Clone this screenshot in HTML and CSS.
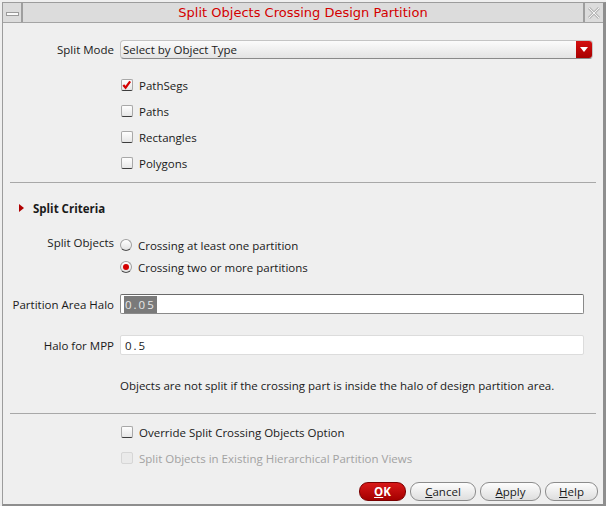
FILE: index.html
```html
<!DOCTYPE html>
<html>
<head>
<meta charset="utf-8">
<link rel="stylesheet" href="styles.css">
</head>
<body>
<div class="window">
  <div class="titlebar">
    <div class="tb-btn tb-min"><span class="min-bar"></span></div>
    <div class="tb-title">Split Objects Crossing Design Partition</div>
    <div class="tb-btn tb-close">
      <svg width="16" height="16" viewBox="0 0 16 16"><path d="M3 3 L13 13 M13 3 L3 13" stroke="#b8b8b8" stroke-width="3" fill="none"/><path d="M3 3 L13 13 M13 3 L3 13" stroke="#f4f4f4" stroke-width="1" fill="none"/></svg>
    </div>
  </div>
  <div class="content">
    <div class="row row-combo">
      <div class="label">Split Mode</div>
      <div class="combo"><span class="combo-text">Select by Object Type</span><span class="combo-btn"><svg width="8" height="5" viewBox="0 0 8 5"><path d="M0 0 H8 L4 5 Z" fill="#fff"/></svg></span></div>
    </div>
    <div class="checks first-checks">
      <div class="check-row"><span class="cb checked"><svg width="12" height="12" viewBox="0 0 12 12"><path d="M2.5 6 L5 9 L10 2" stroke="#d40000" stroke-width="2.4" fill="none"/></svg></span><span>PathSegs</span></div>
      <div class="check-row"><span class="cb"></span><span>Paths</span></div>
      <div class="check-row"><span class="cb"></span><span>Rectangles</span></div>
      <div class="check-row"><span class="cb"></span><span>Polygons</span></div>
    </div>
    <div class="sep sep1"></div>
    <div class="section"><svg class="tri" width="5" height="8" viewBox="0 0 5 8"><path d="M0 0 L5 4 L0 8 Z" fill="#b00000"/></svg><span class="section-title">Split Criteria</span></div>
    <div class="row row-radios">
      <div class="label label-top">Split Objects</div>
      <div class="radios">
        <div class="check-row radio-row"><span class="radio"></span><span>Crossing at least one partition</span></div>
        <div class="check-row radio-row"><span class="radio on"><span class="dot"></span></span><span>Crossing two or more partitions</span></div>
      </div>
    </div>
    <div class="row row-input1">
      <div class="label">Partition Area Halo</div>
      <div class="input input-focus"><span class="sel">0.05</span></div>
    </div>
    <div class="row row-input2">
      <div class="label">Halo for MPP</div>
      <div class="input"><span class="val">0.5</span></div>
    </div>
    <div class="info">Objects are not split if the crossing part is inside the halo of design partition area.</div>
    <div class="sep sep2"></div>
    <div class="checks last-checks">
      <div class="check-row"><span class="cb"></span><span>Override Split Crossing Objects Option</span></div>
      <div class="check-row disabled"><span class="cb cb-dis"></span><span>Split Objects in Existing Hierarchical Partition Views</span></div>
    </div>
    <div class="buttons">
      <div class="btn btn-ok"><u>O</u>K</div>
      <div class="btn btn-cancel"><u>C</u>ancel</div>
      <div class="btn btn-apply"><u>A</u>pply</div>
      <div class="btn btn-help"><u>H</u>elp</div>
    </div>
  </div>
</div>
</body>
</html>
```

FILE: styles.css
```css
html, body {
  margin: 0;
  padding: 0;
  background: #efefef;
}
body {
  font-family: "Open Sans", "DejaVu Sans", sans-serif;
  font-size: 11.5px;
  color: #1a1a1a;
}
.window {
  margin: 2px 0 0 2px;
  width: 604px;
  height: 504px;
  box-sizing: border-box;
  border-left: 1px solid #9c9c9c;
  border-top: 1px solid #9c9c9c;
  border-right: 3px solid #8e8e8e;
  border-bottom: 2px solid #8e8e8e;
  background: #efefef;
  display: flex;
  flex-direction: column;
}
.titlebar {
  height: 19px;
  display: flex;
  background: #dcdcdc;
  border-bottom: 1px solid #a4a4a4;
}
.tb-btn {
  width: 18px;
  display: flex;
  align-items: center;
  justify-content: center;
  background: #dcdcdc;
}
.tb-min {
  border-right: 2px solid #9e9e9e;
}
.min-bar {
  width: 11px;
  height: 2px;
  border: 1px solid #9a9a9a;
  background: #fafafa;
  margin-top: 2px;
}
.tb-close {
  border-left: 2px solid #9e9e9e;
  width: 18px;
}
.tb-title {
  flex: 1;
  text-align: center;
  color: #d40000;
  font-size: 13px;
  line-height: 19px;
  font-family: "DejaVu Sans", sans-serif;
}
.content {
  flex: 1;
  padding-top: 17px;
  display: flex;
  flex-direction: column;
}
.row {
  display: grid;
  grid-template-columns: 111px 1fr;
  column-gap: 6px;
  align-items: center;
}
.label {
  text-align: right;
}
.label-top {
  align-self: start;
  margin-top: 1px;
}
.combo {
  height: 19px;
  margin-right: 10px;
  box-sizing: border-box;
  border: 1px solid #c4c4c4;
  border-bottom-color: #8a8a8a;
  border-radius: 4px;
  background: linear-gradient(#fbfbfb, #e4e4e4);
  display: flex;
  align-items: center;
  overflow: hidden;
}
.combo-text {
  flex: 1;
  padding-left: 2px;
}
.combo-btn {
  width: 16px;
  height: 100%;
  background: linear-gradient(#d41010, #a80000);
  display: flex;
  align-items: center;
  justify-content: center;
}
.checks {
  margin-left: 118px;
  display: flex;
  flex-direction: column;
}
.first-checks {
  margin-top: 13px;
}
.check-row {
  height: 26px;
  display: flex;
  align-items: center;
  gap: 6px;
}
.cb {
  width: 12px;
  height: 12px;
  box-sizing: border-box;
  border: 1px solid #a8a8a8;
  border-bottom: 1px solid #3c3c3c;
  border-radius: 2px;
  background: linear-gradient(#fefefe, #e6e6e6);
  display: flex;
}
.cb svg {
  margin: -1px 0 0 -1px;
}
.cb-dis {
  border-color: #d6d6d6;
  background: #eaeaea;
}
.disabled {
  color: #a2a2a2;
}
.sep {
  height: 1px;
  background: #a8a8a8;
  margin-left: 7px;
  margin-right: 7px;
}
.sep1 {
  margin-top: 6px;
}
.section {
  margin-top: 15px;
  height: 20px;
  display: flex;
  align-items: center;
  padding-left: 16px;
}
.tri {
  margin-right: 9px;
}
.section-title {
  font-weight: bold;
}
.row-radios {
  margin-top: 16px;
}
.radios {
  display: flex;
  flex-direction: column;
}
.radio-row {
  height: 22px;
}
.radio {
  width: 12px;
  height: 12px;
  box-sizing: border-box;
  border-radius: 50%;
  border: 1px solid #a0a0a0;
  border-bottom-color: #505050;
  background: linear-gradient(#ffffff, #e2e2e2);
  display: flex;
  align-items: center;
  justify-content: center;
}
.dot {
  width: 6px;
  height: 6px;
  border-radius: 50%;
  background: #d40000;
}
.row-input1 {
  margin-top: 16px;
}
.row-input2 {
  margin-top: 21px;
}
.input {
  height: 20px;
  margin-right: 19px;
  box-sizing: border-box;
  background: #ffffff;
  border: 1px solid #dcdcdc;
  border-radius: 2px;
  display: flex;
  align-items: center;
  padding-left: 3px;
  letter-spacing: 2px;
}
.input-focus {
  border: 1px solid #8a8a8a;
  border-top-color: #6a6a6a;
}
.sel {
  background: #7a7a7a;
  color: #e8e8e8;
  padding: 1px 1px 1px 1px;
  letter-spacing: 2px;
}
.val {
  padding-left: 1px;
}
.info {
  margin-top: 23px;
  margin-left: 117px;
  line-height: 16px;
}
.sep2 {
  margin-top: 19px;
}
.last-checks {
  margin-top: 5px;
}
.buttons {
  margin-top: 11px;
  display: flex;
  justify-content: flex-end;
  gap: 4px;
  padding-right: 5px;
}
.btn {
  height: 19px;
  box-sizing: border-box;
  border: 1px solid #8c8c8c;
  border-radius: 9px;
  background: linear-gradient(#fdfdfd, #dedede);
  display: flex;
  align-items: center;
  justify-content: center;
  color: #1a1a1a;
}
.btn-ok {
  width: 47px;
  background: linear-gradient(#d81818, #a40000);
  border-color: #7a0000;
  color: #ffffff;
  font-weight: bold;
}
.btn-cancel { width: 66px; }
.btn-apply { width: 61px; }
.btn-help { width: 53px; }
```
